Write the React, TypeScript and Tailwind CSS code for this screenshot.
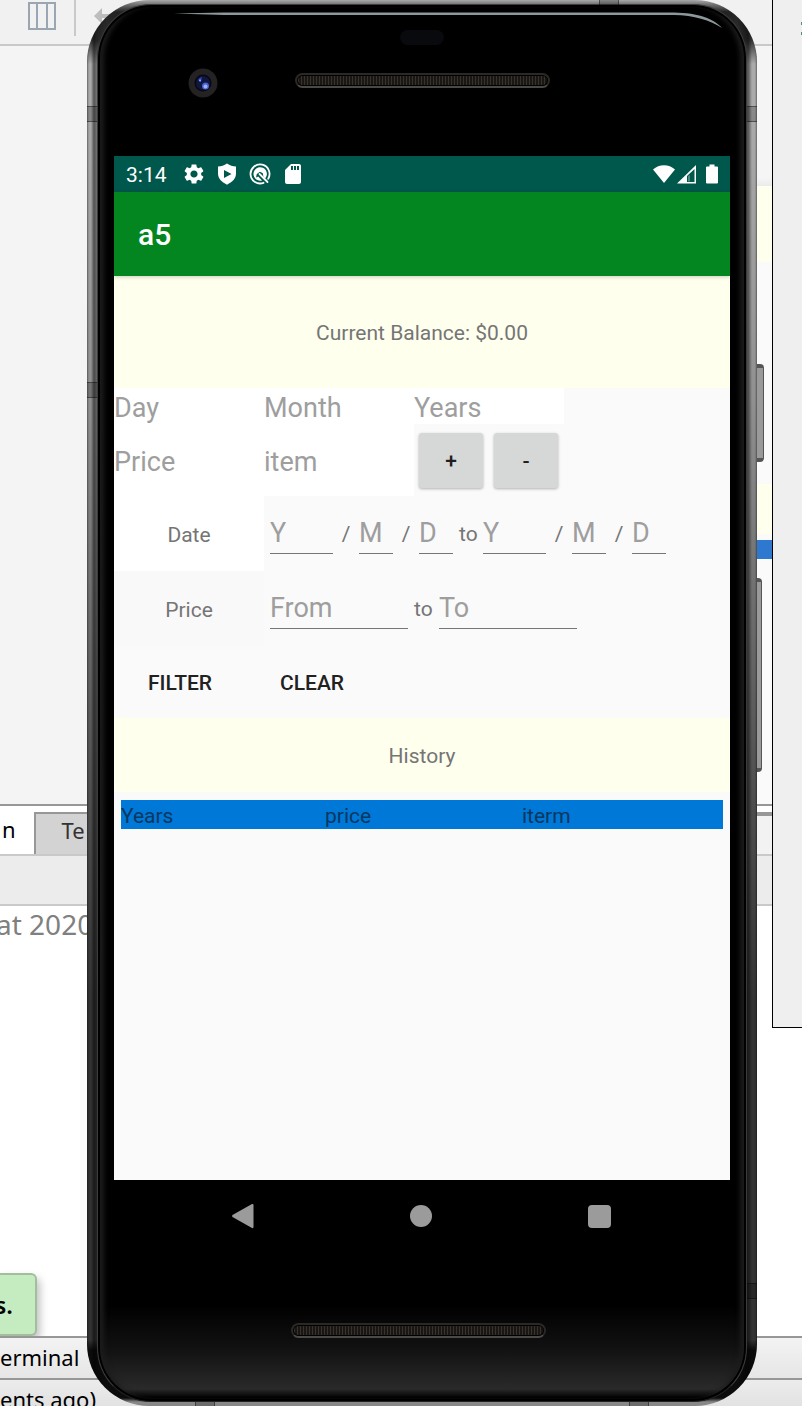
import React from "react";
import { MdSettings, MdSdCard } from "react-icons/md";

function ShieldIcon() {
  return (
    <svg viewBox="0 0 24 24" className="size-6" fill="currentColor" aria-hidden="true">
      <path
        fillRule="evenodd"
        d="M12 1.500c2.800 1.900 5.800 2.900 9 3.100v7c0 5-3.600 8.600-9 11.100-5.400-2.500-9-6.100-9-11.100v-7c3.200-.2 6.200-1.200 9-3.100zM9 8v8l7.500-4z"
      />
    </svg>
  );
}

function DebugIcon() {
  return (
    <svg viewBox="0 0 24 24" className="size-6" aria-hidden="true">
      <path
        d="M15.500 20.800A9.500 9.500 0 1 1 20.200 16.800"
        fill="none"
        stroke="currentColor"
        strokeWidth="1.800"
        strokeLinecap="round"
      />
      <path
        d="M17 16.600A6.700 6.700 0 1 0 14 18.400L10.200 14.600 8 15.500l.8-3.500 3.200-2.200 2.800 1.400.6 3.600z"
        fill="currentColor"
      />
      <path d="M11.500 12 19.500 20" stroke="currentColor" strokeWidth="1.800" strokeLinecap="round" />
    </svg>
  );
}

function Band({ className }: { className: string }) {
  return <span className={`absolute border-black/40 bg-black/20 ${className}`} />;
}

function Speaker() {
  return (
    <div className="h-[15px] w-[255px] rounded-full border-2 border-[#2a2928] border-b-[#4c4a48] bg-black p-px">
      <div className="h-full rounded-full bg-[repeating-linear-gradient(90deg,#37322b_0px,#37322b_1px,#191613_1px,#191613_3px)]" />
    </div>
  );
}

function Workspace() {
  return (
    <div className="col-start-1 row-start-1 flex min-w-0 flex-col overflow-hidden bg-white font-['Noto_Sans',sans-serif] text-[22px] leading-8 text-black">
      <div className="flex h-[46px] shrink-0 items-start border-b-2 border-[#c9c9c9] bg-[#f1f1f1] pl-7">
        <svg width="28" height="30" viewBox="0 0 28 30" fill="none" stroke="#9aa6b1" strokeWidth="2" aria-hidden="true">
          <path d="M1 3h26v26H1zM9 3v26M19 3v26" />
        </svg>
        <span className="ml-[18px] h-9 w-0.5 bg-[#c9c9c9]" />
        <svg className="ml-[18px]" width="28" height="30" viewBox="0 0 28 30" fill="#bdbdbd" aria-hidden="true">
          <path d="M0 16l8-8v6h20v4H8v6z" />
        </svg>
      </div>
      <div className="flex h-[758px] shrink-0 justify-end bg-[#f4f4f4] pr-[30px]">
        <div className="flex w-20 flex-col bg-[#fafafa]">
          <div className="h-[140px] bg-[linear-gradient(#f5f5f5_94%,#ebebeb)]" />
          <div className="h-[76px] bg-[#ffffee]" />
          <div className="h-[222px]" />
          <div className="h-[50px] bg-[#ffffee]" />
          <div className="mt-1.5 h-[19px] bg-[#2f78cf]" />
        </div>
      </div>
      <div className="flex h-[52px] shrink-0 border-y-2 border-t-[#979797] border-b-[#c9c9c9]">
        <span className="pl-0.5 pt-[7px]">n</span>
        <span className="ml-[18px] mt-1.5 w-[120px] border-l-2 border-t-2 border-[#979797] bg-[#d3d3d3] pl-[26px] text-[#333]">
          Te
        </span>
        <span className="mt-1.5 flex-1 border-t-4 border-[#979797] bg-[#f2f2f2]" />
      </div>
      <div className="h-[50px] shrink-0 border-b-2 border-[#c9c9c9] bg-[#ececec]" />
      <div className="flex grow flex-col items-start justify-between">
        <p className="-ml-1 whitespace-nowrap pt-0.5 text-[28px] text-[#808080]">at 2020</p>
        <div className="flex h-[63px] w-[37px] items-center justify-end rounded-r-md border-2 border-l-0 border-[#a3bd9f] bg-[#c5ecc1] pr-[22px] text-2xl font-semibold shadow-[3px_5px_8px_rgba(0,0,0,0.25)]">
          s.
        </div>
      </div>
      <div className="h-11 shrink-0 border-y-2 border-[#979797] bg-[linear-gradient(#f3f3f3,#e6e6e6)] pt-[3px]">erminal</div>
      <div className="h-[26px] shrink-0 whitespace-nowrap bg-[linear-gradient(#ececec,#e2e2e2)] pt-[3px]">ents ago)</div>
    </div>
  );
}

function StatusBar() {
  return (
    <div className="flex h-9 items-center bg-[#00574b] pl-3 pr-[11px] text-white">
      <span className="pt-0.5 text-[21px] leading-6">3:14</span>
      <div className="ml-[15px] flex items-center gap-[9px]">
        <MdSettings className="size-6" />
        <ShieldIcon />
        <DebugIcon />
        <MdSdCard className="size-6" />
      </div>
      <svg className="ml-auto" width="66" height="22" viewBox="0 0 66 22" aria-label="Wi-Fi, signal and battery full">
        <path d="M0 6.500C6 .8 16 .8 22 6.500L11 20z" fill="#fff" />
        <path d="M24 20.500 43 2v18.500z" fill="#fff" />
        <path d="M34 13 41.500 6v13H34z" fill="#00574b" />
        <path d="M35 13 37 12v6.500h-2z" fill="#fff" opacity=".3" />
        <path d="M56.500 1.500h5v2H64a1 1 0 0 1 1 1v15a1 1 0 0 1-1 1H54a1 1 0 0 1-1-1v-15a1 1 0 0 1 1-1h2.500z" fill="#fff" />
      </svg>
    </div>
  );
}

function PlainField({ label }: { label: string }) {
  return (
    <input
      aria-label={label}
      placeholder={label}
      className="h-full w-[150px] bg-white pt-1 text-[27px] leading-8 text-black outline-none placeholder:text-[#9e9e9e]"
    />
  );
}

function LineField({ label, hint, width }: { label: string; hint: string; width: string }) {
  return (
    <div className={`px-1.5 ${width}`}>
      <input
        aria-label={label}
        placeholder={hint}
        className="h-10 w-full border-b border-[#757575] bg-transparent text-[27px] leading-8 text-black outline-none placeholder:text-[#9e9e9e]"
      />
    </div>
  );
}

function Slash() {
  return <span className="w-3.5 text-center">/</span>;
}

function DateFields({ name }: { name: string }) {
  return (
    <>
      <LineField label={`${name} year`} hint="Y" width="w-[75px]" />
      <Slash />
      <LineField label={`${name} month`} hint="M" width="w-[46px]" />
      <Slash />
      <LineField label={`${name} day`} hint="D" width="w-[46px]" />
    </>
  );
}

function SquareButton({ children, label }: { children: React.ReactNode; label: string }) {
  return (
    <button
      type="button"
      aria-label={label}
      className="h-[55px] w-16 rounded-[3px] bg-[#d6d8d7] pt-0.5 text-[21px] font-medium text-[#1f1f1f] shadow-[0_1px_3px_rgba(0,0,0,0.3)]"
    >
      {children}
    </button>
  );
}

function Screen() {
  return (
    <main className="flex h-[1024px] flex-col bg-[#fafafa] text-[21px] leading-6 text-[#757575]">
      <StatusBar />
      <header className="z-10 flex h-[84px] items-center bg-[#03861f] px-6 pt-0.5 shadow-[0_1px_4px_rgba(0,0,0,0.2)]">
        <h1 className="text-[30px] font-medium leading-9 text-white">a5</h1>
      </header>
      <p className="flex h-28 items-center justify-center bg-[#ffffee] pt-0.5">Current Balance: $0.00</p>
      <form onSubmit={(e) => e.preventDefault()}>
        <div className="flex h-9">
          <PlainField label="Day" />
          <PlainField label="Month" />
          <PlainField label="Years" />
        </div>
        <div className="flex h-[72px] items-center">
          <PlainField label="Price" />
          <PlainField label="item" />
          <div className="flex gap-[11px] px-[5px]">
            <SquareButton label="Add">+</SquareButton>
            <SquareButton label="Subtract">-</SquareButton>
          </div>
        </div>
        <fieldset className="flex h-[75px] items-center">
          <span className="flex h-full w-[150px] items-center justify-center bg-white pt-0.5">Date</span>
          <DateFields name="From" />
          <span className="w-[18px]">to</span>
          <DateFields name="To" />
        </fieldset>
        <fieldset className="flex h-[75px] items-center">
          <span className="flex h-full w-[150px] items-center justify-center bg-[#f9f9f9] pt-0.5">Price</span>
          <LineField label="Price from" hint="From" width="w-[150px]" />
          <span className="w-[19px]">to</span>
          <LineField label="Price to" hint="To" width="w-[150px]" />
        </fieldset>
        <div className="flex h-[72px] font-medium text-[#212121]">
          <button type="submit" className="w-[132px] pt-0.5">FILTER</button>
          <button type="reset" className="w-[132px] pt-0.5">CLEAR</button>
        </div>
      </form>
      <h2 className="flex h-[74px] items-center justify-center bg-[#ffffee] pt-0.5">History</h2>
      <div className="px-[7px] pt-2">
        <table className="w-full table-fixed bg-[#0078d7] text-left text-[#07375f]">
          <thead>
            <tr className="h-[29px]">
              <th className="w-[204px] p-0 pt-0.5 font-normal">Years</th>
              <th className="w-[197px] p-0 pt-0.5 font-normal">price</th>
              <th className="p-0 pt-0.5 font-normal">iterm</th>
            </tr>
          </thead>
        </table>
      </div>
    </main>
  );
}

function Phone() {
  return (
    <div className="relative z-10 col-start-1 row-start-1 ml-[87px] mr-[45px] min-w-0 font-[Roboto,sans-serif]">
      <span className="absolute -right-[7px] top-[364px] h-[98px] w-2 rounded-r-sm border-y-4 border-r border-[#555] bg-[#9a9a9a]" />
      <span className="absolute -right-[5px] top-[578px] h-[194px] w-1.5 rounded-r-sm border-y-4 border-r border-[#555] bg-[#9a9a9a]" />
      <div className="relative overflow-hidden rounded-[62px] bg-[linear-gradient(90deg,rgba(0,0,0,0.4)_0px,transparent_2px,transparent_4px,rgba(0,0,0,0.5)_7px,rgba(0,0,0,0.3)_10px,transparent_20px,transparent_calc(100%-20px),rgba(0,0,0,0.5)_calc(100%-9px),transparent_calc(100%-5px),transparent_calc(100%-2px),rgba(0,0,0,0.4)_100%),linear-gradient(#aaa_0px,#777_4px,#222_12px,#333_40px,#aaa_64px,#aaa_110px,#909090_400px,#555_750px,#333_1000px,#333_1340px,#0c0c0c_1350px,#0c0c0c_1398px,#888_1402px)] px-2.5 pb-1 pt-1">
        <Band className="left-0 top-[106px] h-4 w-2.5 border-y" />
        <Band className="right-0 top-[106px] h-4 w-2.5 border-y" />
        <Band className="left-0 top-[382px] h-4 w-2.5 border-y" />
        <Band className="bottom-[107px] right-0 h-4 w-2.5 border-y" />
        <Band className="right-[138px] top-0 h-1.5 w-5 border-x" />
        <Band className="bottom-0 left-[108px] h-1 w-5 border-x" />
        <Band className="bottom-0 right-[108px] h-1 w-5 border-x" />
        <div className="rounded-[54px] border border-[#3c3c3c] border-b-[#222] bg-black bg-[linear-gradient(transparent_1300px,#121212_1345px,#2a2a2a_1384px,#050505_1392px)] px-4 shadow-[inset_0_0_0_2px_#000,inset_7px_0_5px_-1px_#1c1c1c,inset_-7px_0_5px_-1px_#1c1c1c]">
          <div className="relative flex h-[151px] flex-col items-center">
            <svg className="absolute inset-x-0 top-[7px] h-5 w-full" viewBox="0 0 616 20" preserveAspectRatio="none" aria-hidden="true">
              <path d="M60 1.500 110 .500H560C585 1 600 7 608 16 596 8 580 3.500 560 3H110z" fill="#8c9899" />
            </svg>
            <span className="mt-[25px] h-[15px] w-11 rounded-full bg-[#090a0e]" />
            <div className="mt-[23px] grid w-full grid-cols-[1fr_255px_1fr] items-start">
              <svg className="ml-[74px] size-[30px]" viewBox="0 0 30 30" aria-hidden="true">
                <circle cx="15" cy="15" r="14.500" fill="#242222" />
                <circle cx="15" cy="15" r="8.500" fill="#080812" />
                <circle cx="15" cy="15" r="7" fill="#10173f" />
                <path d="M10 12a6 6 0 0 1 4-3l-1 5z" fill="#3146a5" />
                <circle cx="17.500" cy="18" r="3.500" fill="#4862cf" />
                <circle cx="17.500" cy="18.500" r="2" fill="#9eb2ff" />
                <circle cx="12" cy="12.500" r="1" fill="#90a8ff" />
              </svg>
              <div className="pt-[5px]">
                <Speaker />
              </div>
            </div>
          </div>
          <Screen />
          <nav className="flex h-[72px] items-center justify-center gap-[130px] pr-0.5">
            <button type="button" aria-label="Back" className="flex size-12 items-center justify-center">
              <svg width="24" height="26" viewBox="0 0 24 26" fill="#9b9b9b" aria-hidden="true">
                <path d="M1.500 12 21 1q1.500-.5 1.500 1v22q0 1.500-1.500 1L1.500 14q-1-1 0-2z" />
              </svg>
            </button>
            <button type="button" aria-label="Home" className="flex size-12 items-center justify-center">
              <span className="size-[22px] rounded-full bg-[#9b9b9b]" />
            </button>
            <button type="button" aria-label="Overview" className="flex size-12 items-center justify-center">
              <span className="size-[23px] rounded-sm bg-[#9b9b9b]" />
            </button>
          </nav>
          <div className="flex h-[149px] justify-center pr-2 pt-[71px]">
            <Speaker />
          </div>
        </div>
      </div>
    </div>
  );
}

export default function App() {
  return (
    <div className="relative grid grid-cols-1 overflow-hidden bg-white">
      <Workspace />
      <aside className="absolute right-0 top-0 h-[1028px] w-[30px] border-b border-l border-black bg-[#efefef]">
        <svg className="ml-auto mt-[20px]" width="2" height="16" fill="#5d8a80" aria-hidden="true">
          <path d="M1 2h1v3H1zM1 12h1v3H1z" />
        </svg>
      </aside>
      <Phone />
    </div>
  );
}
